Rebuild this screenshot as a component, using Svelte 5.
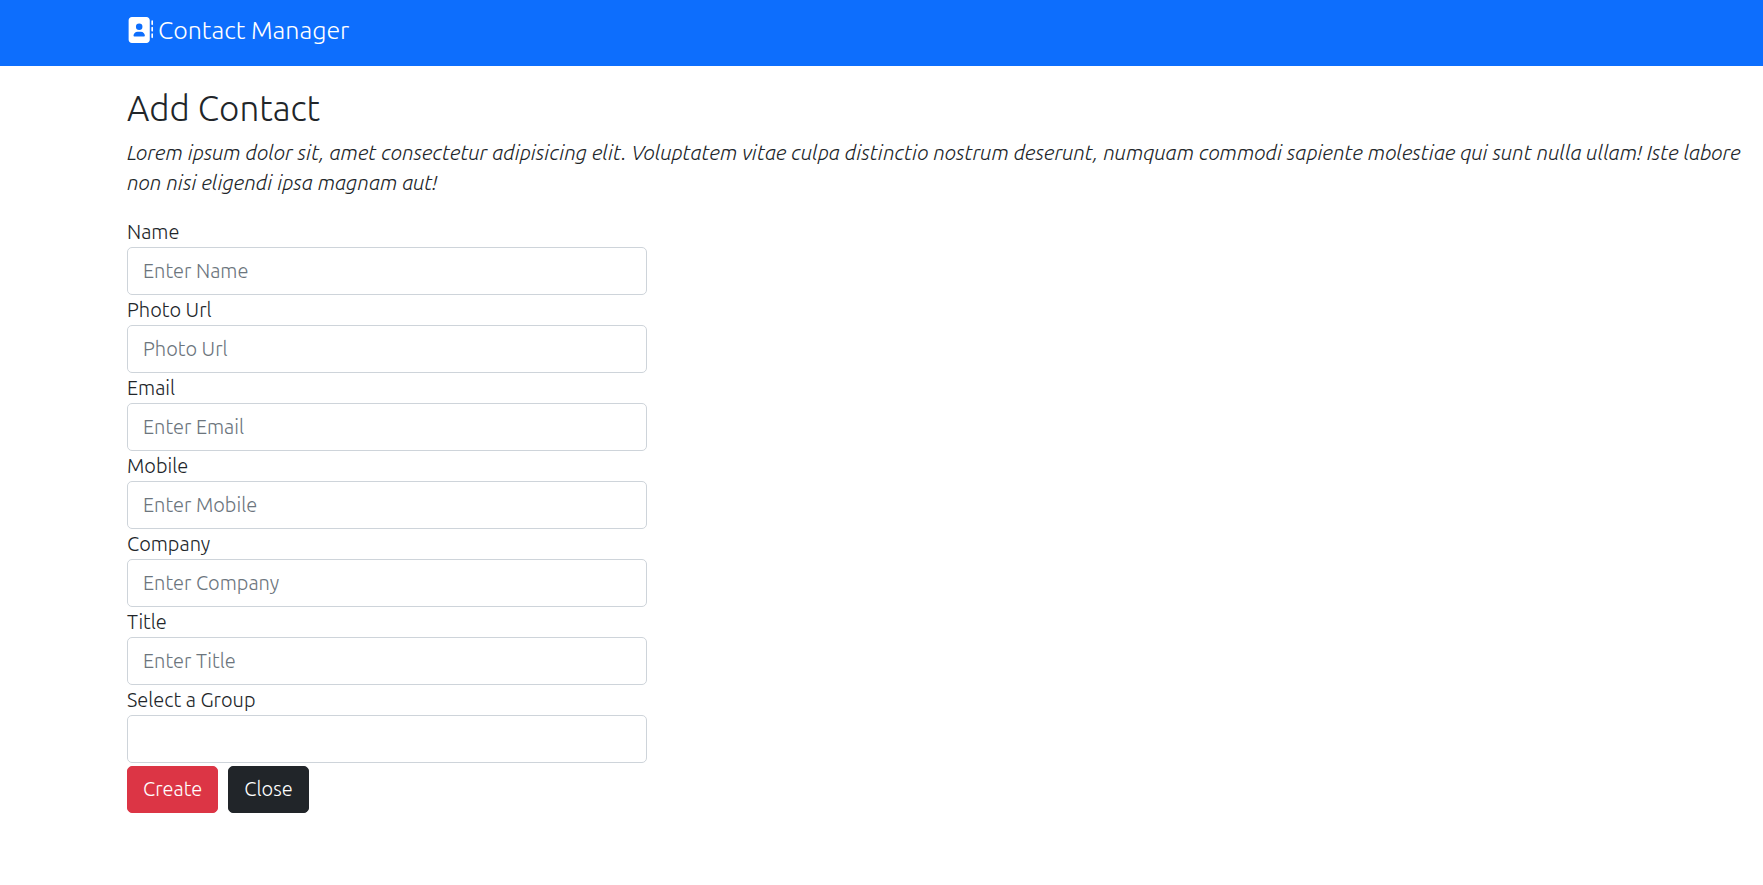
<script>
  const fields = [
    { id: 'name', label: 'Name', placeholder: 'Enter Name', type: 'text' },
    { id: 'photo', label: 'Photo Url', placeholder: 'Photo Url', type: 'text' },
    { id: 'email', label: 'Email', placeholder: 'Enter Email', type: 'email' },
    { id: 'mobile', label: 'Mobile', placeholder: 'Enter Mobile', type: 'tel' },
    { id: 'company', label: 'Company', placeholder: 'Enter Company', type: 'text' },
    { id: 'title', label: 'Title', placeholder: 'Enter Title', type: 'text' }
  ];
</script>

<header class="navbar">
  <a class="brand" href="#/">
    <svg class="brand-icon" viewBox="0 0 512 512" aria-hidden="true">
      <path fill="currentColor" d="M96 0C60.7 0 32 28.7 32 64V448c0 35.3 28.7 64 64 64H384c35.3 0 64-28.7 64-64V64c0-35.3-28.7-64-64-64H96zM208 288h64c44.2 0 80 35.8 80 80c0 8.8-7.2 16-16 16H144c-8.8 0-16-7.2-16-16c0-44.2 35.8-80 80-80zm96-96a64 64 0 1 1 -128 0 64 64 0 1 1 128 0zM512 80c0-8.8-7.2-16-16-16s-16 7.2-16 16v64c0 8.8 7.2 16 16 16s16-7.2 16-16V80zM496 192c-8.8 0-16 7.2-16 16v64c0 8.8 7.2 16 16 16s16-7.2 16-16V208c0-8.8-7.2-16-16-16zm16 144c0-8.8-7.2-16-16-16s-16 7.2-16 16v64c0 8.8 7.2 16 16 16s16-7.2 16-16V336z" />
    </svg>
    <span>Contact Manager</span>
  </a>
</header>

<main class="page">
  <h1>Add Contact</h1>
  <p class="lead">
    Lorem ipsum dolor sit, amet consectetur adipisicing elit. Voluptatem vitae culpa distinctio nostrum deserunt, numquam commodi sapiente molestiae qui sunt nulla ullam! Iste labore non nisi eligendi ipsa magnam aut!
  </p>

  <div class="columns">
    <form onsubmit={(e) => e.preventDefault()}>
      {#each fields as field (field.id)}
        <div class="field">
          <label for={field.id}>{field.label}</label>
          <input class="control" id={field.id} type={field.type} placeholder={field.placeholder} />
        </div>
      {/each}
      <div class="field">
        <label for="group">Select a Group</label>
        <select class="control" id="group"></select>
      </div>
      <div class="actions">
        <button class="btn create" type="submit">Create</button>
        <a class="btn close" href="#/contacts">Close</a>
      </div>
    </form>
  </div>
</main>

<style>
  :global(body) {
    margin: 0;
    background: #fff;
    color: #212529;
    font-family: Ubuntu, 'Open Sans', sans-serif;
    font-size: 20px;
    font-weight: 300;
    line-height: 30px;
  }

  .navbar {
    display: flex;
    padding: 11px 16px 17px 127px;
    background: #0d6efd;
  }

  .brand {
    display: flex;
    align-items: center;
    gap: 5px;
    color: #fff;
    font-size: 25px;
    line-height: 38px;
    text-decoration: none;
  }

  .brand-icon {
    width: 26px;
    height: 26px;
  }

  .page {
    padding: 21px 16px 20px 127px;
  }

  h1 {
    margin: 0 0 8px;
    font-size: 35px;
    font-weight: 300;
    line-height: 42px;
  }

  .lead {
    margin: 0 0 20px;
    font-size: 21px;
    font-style: italic;
  }

  .columns {
    display: grid;
    grid-template-columns: repeat(3, 1fr);
    column-gap: 30px;
  }

  .field {
    display: flex;
    flex-direction: column;
  }

  .control {
    box-sizing: border-box;
    width: 100%;
    height: 48px;
    margin: 0;
    padding: 7px 15px 9px;
    border: 1px solid #ced4da;
    border-radius: 5px;
    background: #fff;
    color: #212529;
    font: inherit;
    appearance: none;
  }

  .control::placeholder {
    color: #6c757d;
    opacity: 1;
  }

  .control:focus {
    outline: 2px solid #86b7fe;
  }

  .actions {
    display: flex;
    gap: 10px;
    margin-top: 3px;
  }

  .btn {
    padding: 7px 15px 8px;
    border: 1px solid transparent;
    border-radius: 5px;
    color: #fff;
    font: inherit;
    text-decoration: none;
    cursor: pointer;
  }

  .create {
    border-color: #dc3545;
    background: #dc3545;
  }

  .close {
    border-color: #212529;
    background: #212529;
  }
</style>
